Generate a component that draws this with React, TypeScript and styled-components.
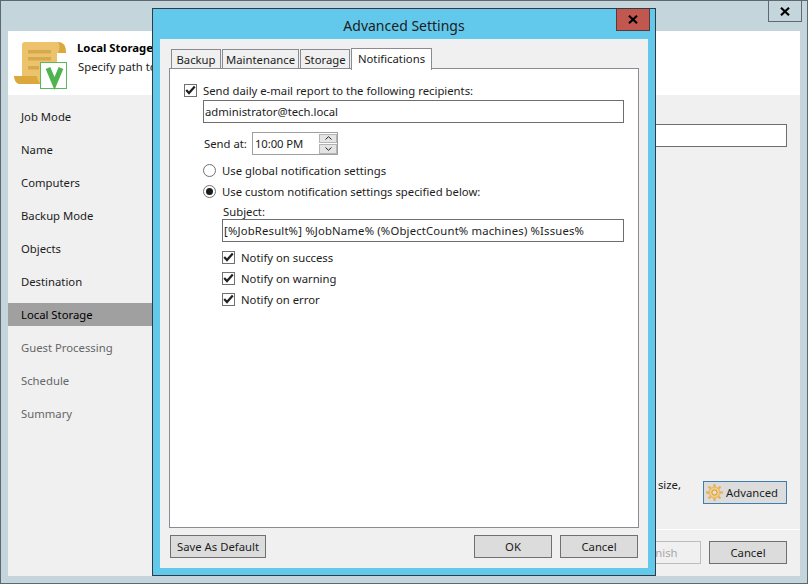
import React from "react";
import styled, { createGlobalStyle } from "styled-components";

const Global = createGlobalStyle`
  html, body { margin: 0; padding: 0; background: #c4d5db; }
  * { box-sizing: border-box; }
  body { font-family: "Noto Sans", "Open Sans", sans-serif; font-size: 11.3px; color: #1c1c1c; }
`;

const Wizard = styled.div`
  position: relative; width: 808px; height: 584px; background: #c4d5db;
  border: 1px solid #5f6871; display: flex; flex-direction: column; padding: 0 7px 7px; overflow: hidden;
`;
const TitleRow = styled.div`height: 30px; display: flex; justify-content: flex-end; flex: none;`;
const CloseBtn = styled.div<{ $danger?: boolean }>`
  width: 34px; height: 22px; display: flex; align-items: center; justify-content: center;
  margin-right: ${p => (p.$danger ? "0" : "-2px")};
  margin-top: ${p => (p.$danger ? "0" : "-1px")};
  background: ${p => (p.$danger ? "#c1574f" : "transparent")};
  border: 1px solid ${p => (p.$danger ? "#5a3a38" : "#5f6871")};
  border-top: ${p => (p.$danger ? "none" : "1px solid #5f6871")};
`;
const Head = styled.div`height: 64px; background: #fff; display: flex; flex: none; padding: 6px 0 0 6px; gap: 11px;`;
const HeadText = styled.div`padding-top: 3px; margin-left: -1px;`;
const HeadTitle = styled.div`font-weight: 700; line-height: 16px; color: #000;`;
const HeadSub = styled.div`line-height: 16px; margin: 3px 0 0 1px;`;
const Body = styled.div`flex: 1; display: flex; background: #f0f0f0; min-height: 0;`;
const Side = styled.nav`width: 144px; flex: none; padding-top: 10px; display: flex; flex-direction: column; gap: 10px;`;
const SideItem = styled.div<{ $active?: boolean; $off?: boolean }>`
  height: 23px; line-height: 24px; padding-left: 13px;
  background: ${p => (p.$active ? "#a0a0a0" : "transparent")};
  color: ${p => (p.$active ? "#000" : p.$off ? "#666" : "#1c1c1c")};
`;
const Main = styled.div`flex: 1; display: flex; flex-direction: column; min-width: 0;`;
const MainTop = styled.div`flex: 1; padding: 29px 13px 0 0; display: flex; flex-direction: column; justify-content: space-between;`;
const PathInput = styled.div`height: 23px; border: 1px solid #6e6e6e; background: #fff;`;
const AdvRow = styled.div`display: flex; justify-content: flex-end; align-items: flex-start; padding-bottom: 25px; gap: 22px;`;
const SizeText = styled.span`line-height: 14px; margin-top: -3px;`;
const Btn = styled.div<{ $w: number; $off?: boolean; $focus?: boolean }>`
  width: ${p => p.$w}px; height: 23px; display: flex; align-items: center; justify-content: center; gap: 3px; flex: none;
  background: ${p => (p.$off ? "#f0f0f0" : "#dcdcdc")};
  border: 1px solid ${p => (p.$off ? "#bdbdbd" : p.$focus ? "#3f7eac" : "#707070")};
  color: ${p => (p.$off ? "#a8a8a8" : "#1c1c1c")};
  overflow: hidden;
`;
const AdvBtn = styled(Btn)`justify-content: flex-start; padding-left: 2px;`;
const Foot = styled.div`height: 47px; flex: none; border-top: 1px solid #fff; display: flex; justify-content: flex-end; align-items: flex-start; padding: 11px 13px 0 0; gap: 8px;`;

const Dialog = styled.div`
  position: absolute; left: 151px; top: 7px; width: 504px; height: 568px;
  background: #63c9ec; border: 1px solid #2f3c44; display: flex; flex-direction: column; padding: 0 7px 7px;
`;
const DlgTitle = styled.div`
  position: relative; height: 30px; flex: none; display: flex; align-items: center; justify-content: center;
  font-size: 14px; color: #1c1c1c; padding-top: 2px;
`;
const DlgClose = styled.div`position: absolute; right: -2px; top: 0;`;
const Client = styled.div`flex: 1; background: #f0f0f0; padding: 9px 9px 10px; display: flex; flex-direction: column; min-height: 0;`;
const Tabs = styled.div`display: flex; height: 21px; align-items: flex-end; padding-left: 2px; gap: 1px; flex: none; position: relative; z-index: 1;`;
const Tab = styled.div<{ $active?: boolean; $w: number }>`
  width: ${p => p.$w}px; height: ${p => (p.$active ? "22px" : "20px")};
  background: ${p => (p.$active ? "#fff" : "#f0f0f0")};
  border: 1px solid #8a8a92; border-bottom: ${p => (p.$active ? "none" : "1px solid #8a8a92")};
  display: flex; align-items: center; justify-content: center;
  margin-bottom: ${p => (p.$active ? "-1px" : "0")};
  padding: ${p => (p.$active ? "0 0 3px" : "1px 0 0")};
`;
const Pane = styled.div`flex: 1; background: #fff; border: 1px solid #8a8a92; padding: 14px 14px 0; margin-top: -1px; display: flex; flex-direction: column;`;
const Row = styled.div<{ $indent?: number; $top?: number }>`
  display: flex; align-items: center; height: 14px; gap: 6px;
  margin-left: ${p => p.$indent || 0}px; margin-top: ${p => p.$top || 0}px;
`;
const Box = styled.span`width: 13px; height: 13px; flex: none; border: 1px solid #707070; background: #fff; display: flex; align-items: center; justify-content: center;`;
const Radio = styled.span<{ $on?: boolean }>`
  width: 13px; height: 13px; flex: none; border-radius: 50%; border: 1px solid #707070; background: #fff;
  display: flex; align-items: center; justify-content: center;
  &::after { content: ""; width: 7px; height: 7px; border-radius: 50%; background: ${p => (p.$on ? "#1c1c1c" : "transparent")}; }
`;
const TextField = styled.div<{ $indent: number; $top: number; $spread?: boolean }>`
  height: 23px; border: 1px solid #6e6e6e; background: #fff; line-height: 21px; padding-left: 1px;
  letter-spacing: ${p => (p.$spread ? "0.17px" : "0")};
  margin-left: ${p => p.$indent}px; margin-top: ${p => p.$top}px; white-space: nowrap; overflow: hidden;
`;
const SendRow = styled.div`display: flex; align-items: center; margin-top: 9px; margin-left: 20px; height: 23px;`;
const SendLabel = styled.span`width: 48px;`;
const TimeField = styled.div`width: 86px; height: 23px; border: 1px solid #a0a0a0; background: #fff; display: flex; align-items: center; justify-content: space-between; padding: 0 0 0 2px; letter-spacing: -0.1px;`;
const Spin = styled.div`width: 18px; display: flex; flex-direction: column; gap: 1px;`;
const SpinBtn = styled.div`height: 9.5px; background: #e4e4e4; border: 1px solid #b4b4b4; display: flex; align-items: center; justify-content: center;`;
const SubjectLabel = styled.div`margin: 7px 0 0 39px; line-height: 14px;`;
const DlgFoot = styled.div`display: flex; align-items: center; margin-top: 7px; padding: 0 1px; gap: 8px; flex: none;`;
const Spacer = styled.div`flex: 1;`;

const X = () => (
  <svg width="10" height="9" viewBox="0 0 10 9"><path d="M1 .8 L9 8.2 M9 .8 L1 8.2" stroke="#000" strokeWidth="2.2" fill="none" /></svg>
);
const Check = () => (
  <svg width="11" height="10" viewBox="0 0 11 10"><path d="M1.2 5 L4 8 L9.8 1.4" stroke="#222" strokeWidth="2.2" fill="none" /></svg>
);
const Chev = ({ up }: { up?: boolean }) => (
  <svg width="7" height="4" viewBox="0 0 7 4"><path d={up ? "M.5 3.5 L3.5 .7 L6.5 3.5" : "M.5 .5 L3.5 3.3 L6.5 .5"} stroke="#222" strokeWidth="1" fill="none" /></svg>
);
const Scroll = () => (
  <svg width="53" height="48" viewBox="0 0 53 48" style={{ flex: "none", marginTop: 5 }}>
    <path d="M8 3 Q8 0 11 0 H44 Q52 0 52 11 H43 V42 H6 Q1 42 0 34 H8 Z" fill="#ecc26d" />
    <path d="M44 0 Q52 0 52 11 H44 Q47 5 44 0 Z" fill="#dba83e" />
    <path d="M0 34 H23 Q23 39 27 42 H6 Q1 42 0 34 Z" fill="#dba83e" />
    <path d="M14 8 H37 V11.5 H14 Z M14 15 H37 V18.5 H14 Z M14 24 H25 V27.5 H14 Z" fill="#d5a94e" />
    <rect x="26.5" y="20.5" width="26" height="26" fill="#fff" stroke="#5cb85c" />
    <path d="M34 26 L40.5 41.5 L47 26" stroke="#4fb44f" strokeWidth="5" fill="none" />
  </svg>
);
const Gear = () => (
  <svg width="17" height="17" viewBox="0 0 17 17">
    <g stroke="#e6b45a" strokeWidth="2.4">
      <path d="M8.5 0 V17 M0 8.5 H17 M2.5 2.5 L14.5 14.5 M14.5 2.5 L2.5 14.5" />
    </g>
    <circle cx="8.5" cy="8.5" r="5.5" fill="#f0cd88" stroke="#e6b45a" />
    <circle cx="8.5" cy="8.5" r="2.6" fill="#e8e0cc" stroke="#d69a2a" />
  </svg>
);

const steps = ["Job Mode", "Name", "Computers", "Backup Mode", "Objects", "Destination", "Local Storage", "Guest Processing", "Schedule", "Summary"];

export default function App() {
  return (
    <>
      <Global />
      <Wizard>
        <TitleRow><CloseBtn><X /></CloseBtn></TitleRow>
        <Head>
          <Scroll />
          <HeadText>
            <HeadTitle>Local Storage</HeadTitle>
            <HeadSub>Specify path to</HeadSub>
          </HeadText>
        </Head>
        <Body>
          <Side>
            {steps.map((s, i) => (
              <SideItem key={s} $active={i === 6} $off={i > 6}>{s}</SideItem>
            ))}
          </Side>
          <Main>
            <MainTop>
              <PathInput />
              <AdvRow>
                <SizeText>size,</SizeText>
                <AdvBtn $w={84} $focus><Gear />Advanced</AdvBtn>
              </AdvRow>
            </MainTop>
            <Foot>
              <Btn $w={78} $off>Finish</Btn>
              <Btn $w={78}>Cancel</Btn>
            </Foot>
          </Main>
        </Body>
        <Dialog>
          <DlgTitle>
            Advanced Settings
            <DlgClose><CloseBtn $danger><X /></CloseBtn></DlgClose>
          </DlgTitle>
          <Client>
            <Tabs>
              <Tab $w={50}>Backup</Tab>
              <Tab $w={77}>Maintenance</Tab>
              <Tab $w={50}>Storage</Tab>
              <Tab $w={81} $active>Notifications</Tab>
            </Tabs>
            <Pane>
              <Row><Box><Check /></Box>Send daily e-mail report to the following recipients:</Row>
              <TextField $indent={19} $top={3}>administrator@tech.local</TextField>
              <SendRow>
                <SendLabel>Send at:</SendLabel>
                <TimeField>
                  10:00 PM
                  <Spin>
                    <SpinBtn><Chev up /></SpinBtn>
                    <SpinBtn><Chev /></SpinBtn>
                  </Spin>
                </TimeField>
              </SendRow>
              <Row $indent={19} $top={8}><Radio />Use global notification settings</Row>
              <Row $indent={19} $top={7}><Radio $on />Use custom notification settings specified below:</Row>
              <SubjectLabel>Subject:</SubjectLabel>
              <TextField $indent={38} $top={0} $spread>[%JobResult%] %JobName% (%ObjectCount% machines) %Issues%</TextField>
              <Row $indent={38} $top={8}><Box><Check /></Box>Notify on success</Row>
              <Row $indent={38} $top={7}><Box><Check /></Box>Notify on warning</Row>
              <Row $indent={38} $top={7}><Box><Check /></Box>Notify on error</Row>
            </Pane>
            <DlgFoot>
              <Btn $w={96}>Save As Default</Btn>
              <Spacer />
              <Btn $w={78}>OK</Btn>
              <Btn $w={78}>Cancel</Btn>
            </DlgFoot>
          </Client>
        </Dialog>
      </Wizard>
    </>
  );
}
